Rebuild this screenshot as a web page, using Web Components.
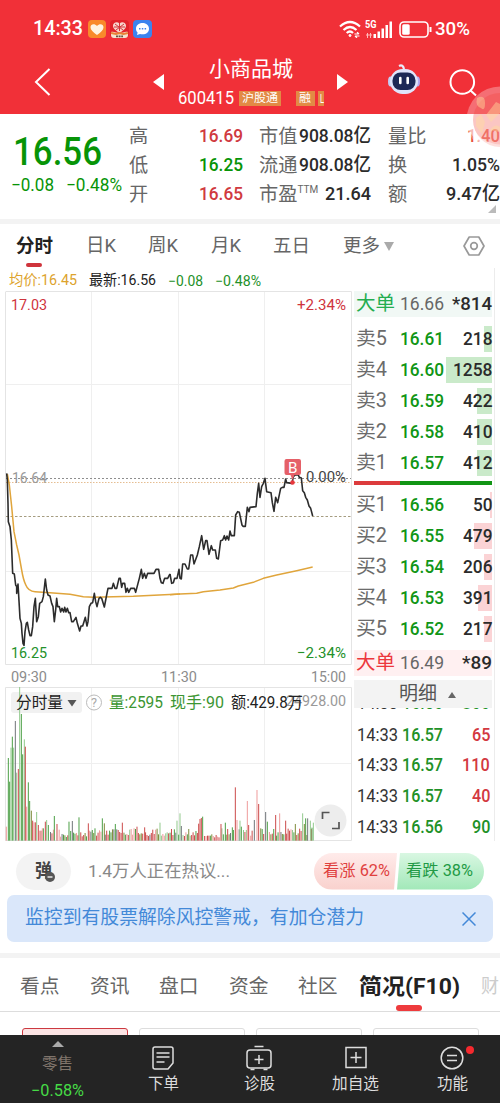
<!DOCTYPE html>
<html lang="zh-CN">
<head>
<meta charset="utf-8">
<title>小商品城 600415</title>
<style>
html,body{margin:0;background:#fff}
body{width:500px;height:1103px;overflow:hidden;font-family:Roboto,"Noto Sans CJK SC",sans-serif;color:#333}
</style>
</head>
<body>
<stock-page></stock-page>
<script>
/* Single-line text fitted to a given width: w = width, s = size, b = weight, c = colour */
class FitText extends HTMLElement{
  connectedCallback(){
    if(this.shadowRoot)return;
    const a=n=>this.getAttribute(n);
    const r=this.attachShadow({mode:'open'});
    r.innerHTML=`<style>:host{display:block;flex:none;white-space:nowrap;width:${a('w')}px;font-size:${a('s')}px;font-weight:${a('b')||400};line-height:1.2;${a('c')?`color:${a('c')}`:''}}
    span{display:inline-block;transform-origin:0 50%}</style><span><slot></slot></span>`;
    const s=r.querySelector('span'),w=s.getBoundingClientRect().width;
    if(w)s.style.transform=`scaleX(${a('w')/w})`;
  }
}
customElements.define('fit-text',FitText);

const define=(name,css,html)=>customElements.define(name,class extends HTMLElement{
  connectedCallback(){
    if(this.shadowRoot)return;
    this.attachShadow({mode:'open'}).innerHTML=`<style>*{box-sizing:border-box}:host{display:block;box-sizing:border-box}svg{display:block;flex:none}${css}</style>${typeof html==='function'?html(this):html}`;
  }
});

define('status-bar',`:host{display:flex;align-items:center;height:30px;padding:0 30px 0 33px;color:#fff}
.apps{display:flex;gap:4px;margin-left:5px}.r{display:flex;align-items:center;margin-left:auto}`,`
<fit-text w="50" s="19.5" b="500">14:33</fit-text>
<div class="apps">
<svg width="18" height="18" viewBox="0 0 18 18"><rect width="18" height="18" rx="4" fill="#f98a2b"/><path d="M9 15C5 12 2.500 10 2.500 7.200 2.500 4 6.500 3 9 6c2.500-3 6.500-2 6.500 1.200C15.500 10 13 12 9 15z" fill="#fff4e2"/></svg>
<svg width="19" height="18" viewBox="0 0 19 18"><rect width="19" height="18" rx="4" fill="#e2222a"/><path d="M9.500 13C5 10 3 8.500 3 5.800 3 2.500 7 1 9.500 3.500 12 1 16 2.500 16 5.800c0 2.700-2 4.200-6.500 7.200z" fill="#f7d5cd"/><path d="M5 4l8 6M14 4l-8 6M9.500 3v8M4 7h11" stroke="#d3343a"/><path d="M1 12c3-1 5 1 8.500 1s5.500-2 8.500-1v3q0 3-3 3H4q-3 0-3-3z" fill="#f6e3d0"/><path d="M1 13l5 1 3.500-1 4 1 4.500-1" stroke="#e98235" stroke-width="2" fill="none"/><path d="M6 16.300h7" stroke="#654" stroke-width="1.800" stroke-dasharray="2 .6"/></svg>
<svg width="19" height="18" viewBox="0 0 19 18"><rect width="19" height="18" rx="4" fill="#3c83ee"/><path d="M9.500 3c4 0 6.500 2.500 6.500 5.700s-2.500 5.600-6.500 5.600c-1 0-1.700-.1-2.500-.4L4 15l.6-2.500C3.500 11.500 3 10.300 3 8.700 3 5.500 5.500 3 9.500 3z" fill="#fff"/><path d="M6 8.700h1.500m1.300 0h1.500m1.300 0h1.500" stroke="#3c83ee" stroke-width="1.500"/></svg>
</div>
<div class="r">
<svg width="22" height="18" viewBox="0 0 22 18" fill="none" stroke="#fff" stroke-width="2.200"><path d="M1 6.500Q11-2.500 21 6.500M4.500 10Q11 4 17.500 10M7.700 13Q11 10 14 13"/><circle cx="11" cy="15.500" r="1" fill="#fff" stroke-width="1"/><path d="M15.500 14h4m-1.500-1.800 2 1.800M20.500 16h-4m1.500 1.800-2-1.800" stroke-width="1.200"/></svg>
<svg width="28" height="20" viewBox="0 0 28 20" style="margin-left:4px" fill="#fff"><text x="0" y="9" font-size="10.500" font-weight="700" textLength="11.500" lengthAdjust="spacingAndGlyphs">5G</text><path d="M8.500 15h2.500v4H8.500zM12.500 12.500H15V19h-2.500zM16.500 9.500H19V19h-2.500zM20.500 6H23v13h-2.500zM24.500 2.500H27V19h-2.500z"/><path d="M1 16h6M2.500 14v5M5.500 14v5" stroke="#fbb" stroke-width="1"/></svg>
<svg width="33" height="17" viewBox="0 0 33 17" style="margin-left:6px"><rect x="1" y="1" width="28" height="15" rx="4" fill="none" stroke="#fff" stroke-width="1.600"/><rect x="3.200" y="3.200" width="7.500" height="10.600" rx="1.500" fill="#fff"/><path d="M31.500 6v5" stroke="#fff" stroke-width="2"/></svg>
<fit-text w="35" s="18.500" b="500" style="margin-left:3px">30%</fit-text></div>`);

define('nav-bar',`:host{display:flex;height:60px;padding:0 24px 0 34px;color:#fff;align-items:center}
.mid{width:146px;margin:0 13px 0 14px;display:flex;flex-direction:column;align-items:center;align-self:flex-start;padding-top:3px}
.code{display:flex;align-items:center;height:20px;width:146px;margin-top:6px}
i{font-style:normal;display:block;height:15px;background:#e28a45;padding:1px 3px 0}`,`
<svg width="17" height="30" viewBox="0 0 17 30" fill="none" stroke="#fff" stroke-width="2" style="margin-top:-5px"><path d="M15.500 2L2 15l13.500 13"/></svg>
<svg width="11" height="16" viewBox="0 0 11 16" fill="#fff" style="margin:-4px 0 0 102px"><path d="M11 0v16L0 8z"/></svg>
<div class="mid"><fit-text w="84" s="21">小商品城</fit-text>
<div class="code"><fit-text w="56" s="18">600415</fit-text><i style="margin-left:5px;width:42px"><fit-text w="36" s="11.500">沪股通</fit-text></i><i style="margin-left:15px;width:19px"><fit-text w="12" s="11.500">融</fit-text></i><i style="margin-left:3px;width:6px;padding:1px 0 0 2px"><fit-text w="4" s="12">L</fit-text></i></div></div>
<svg width="11" height="16" viewBox="0 0 11 16" fill="#fff" style="margin-top:-4px"><path d="M0 0v16l11-8z"/></svg>
<svg width="34" height="32" viewBox="0 0 34 32" style="margin:-8px 0 0 39px"><path d="M12 2q4-2 5 3" stroke="#e9ecfb" stroke-width="2.200" fill="none"/><ellipse cx="3.500" cy="17.500" rx="2.500" ry="5" fill="#c3cdf5"/><ellipse cx="30.500" cy="17.500" rx="2.500" ry="5" fill="#b4a9f0"/><rect x="3" y="5" width="28" height="25" rx="12.500" fill="#dfe4fb"/><rect x="5.500" y="8.500" width="23" height="17.500" rx="8" fill="#1d2856"/><path d="M13.300 14v5M20.700 14v5" stroke="#fff" stroke-width="2.600" stroke-linecap="round"/></svg>
<svg width="28" height="28" viewBox="0 0 28 28" fill="none" stroke="#fff" stroke-width="2" style="margin:-2px 0 0 28px"><circle cx="13.300" cy="13" r="11.800"/><path d="M21 21l6 5.500"/></svg>`);

define('promo-badge',`:host{position:absolute;left:466px;top:86px;width:34px;height:68px;overflow:hidden}`,`
<svg width="68" height="68" viewBox="0 0 68 68"><circle cx="34" cy="34" r="33.500" fill="#fff" opacity=".3"/><circle cx="34" cy="34" r="27" fill="#f14339" opacity=".3"/><path d="M11 12q8-4 8 5t-4 5q-6-2-4-10zM20 29l10-13 4 2v9l-9 9zM10 32l5-4 4 8-3 12-6-8zM24 44q5-7 10-3v5z" fill="#ffdc9e" opacity=".45"/><path d="M5 43q8 16 29 18" stroke="#fff" stroke-width="5" opacity=".45" fill="none"/></svg>`);

define('quote-panel',`:host{display:grid;grid-template-columns:129px 114px 16px 112px 17px 112px;height:105px;padding-top:8px;position:relative;width:500px}
.p{grid-area:1/1;padding:6px 0 0 13px}.d{display:flex;gap:12px;margin:-1px 0 0 -2px}.g{grid-area:1/2;display:grid;grid-template-rows:repeat(3,29px)}
.r{display:flex;justify-content:space-between;align-items:center}
.g.b{grid-column:4}.g.c{grid-column:6}sup{font-size:10px;line-height:1;margin:-9px auto 0 0;color:#666}
svg{position:absolute;right:4px;bottom:6px}`,()=>{
const row=(l,v,w,c,t)=>`<div class="r"><fit-text w="${l.length*19.2}" s="19.200" c="#666">${l}</fit-text>${t?'<sup>TTM</sup>':''}<fit-text w="${w}" s="19" b="500" c="${c}">${v}</fit-text></div>`;
const R='#d03a40',G='#079407',K='#2b2b2b';
return `<div class="p"><fit-text w="89" s="39.500" b="500" c="#079407">16.56</fit-text><div class="d"><fit-text w="43" s="18" c="#079407">−0.08</fit-text><fit-text w="56" s="18" c="#079407">−0.48%</fit-text></div></div>
<div class="g">${row('高','16.69',44,R)+row('低','16.25',44,G)+row('开','16.65',44,R)}</div>
<div class="g b">${row('市值','908.08亿',72,K)+row('流通','908.08亿',72,K)+row('市盈','21.64',46,K,1)}</div>
<div class="g c">${row('量比','1.40',33,'#e8503f')+row('换','1.05%',48,K)+row('额','9.47亿',54,K)}</div><svg width="8" height="8"><path d="M8 0v8H0z" fill="#bbb"/></svg>`});

define('period-tabs',`:host{display:flex;height:49px;border-top:5px solid #f3f3f3;padding:0 15px 0 16px;align-items:center}
.on{position:relative}.on:after{content:"";position:absolute;left:10px;top:28px;width:16px;height:4px;border-radius:2px;background:#cf343c}`,`
<fit-text class="on" w="37" s="18.500" b="700" c="#222">分时</fit-text>
<fit-text w="30" s="19" c="#666" style="margin-left:33px">日K</fit-text><fit-text w="30" s="19" c="#666" style="margin-left:32px">周K</fit-text><fit-text w="30" s="19" c="#666" style="margin-left:33px">月K</fit-text><fit-text w="37" s="18.500" c="#666" style="margin-left:32px">五日</fit-text><fit-text w="37" s="18.500" c="#666" style="margin-left:33px">更多</fit-text>
<svg width="10" height="9" style="margin-left:4px"><path d="M0 0h10L5 9z" fill="#aaa"/></svg>
<svg width="22" height="20" viewBox="0 0 22 20" style="margin-left:auto" fill="none" stroke="#999" stroke-width="1.700"><path d="M6.200 1h9.600L21 10l-5.200 9H6.200L1 10z" stroke-linejoin="round"/><circle cx="11" cy="10" r="3.300"/></svg>`);

define('price-chart',`:host{width:352px;height:573px;padding-top:3px}
.info{display:flex;height:20px;align-items:center;padding-left:9px;gap:12px}
.chart{display:block}text{font-family:Roboto,"Noto Sans CJK SC",sans-serif}`,()=>{
const t=(x,y,w,c,s,v,b=400)=>`<text x="${x}" y="${y}" font-size="${s}" fill="${c}" font-weight="${b}" textLength="${w}" lengthAdjust="spacingAndGlyphs">${v}</text>`;
const price1='20,40 22,60 24,130 25,185 30,200 34,240 38,340 43,342 47,375 50,380 50,400 54,372 58,440 60,475 64,490 66,520 69,550 72,556 75,515 79,490 82,487 86,510 90,527 94,527 98,500 102,440 106,415 108,450 110,485 115,470 119,430 126,425 130,410 136,357 140,390 144,405 150,408 155,430 159,440 163,485 167,450 170,415 173,440 178,440 182,456 186,445 191,456 194,442 198,456 202,445 206,458 210,458 215,485 220,485 228,472 232,490 239,513 243,498 248,498 252,485 256,472 261,498 264,485 268,440 273,430 278,428 283,400 287,425 291,440 297,415 301,412 305,415 313,441 320,405 324,385 336,385 340,370 345,385 350,385 357,355 361,355 365,382 368,370 374,370 378,397 382,385 386,397 392,385 403,385 407,397 414,370 418,355 424,328 428,355 433,340 438,355 443,340 462,340 468,328 476,328 480,355 484,368 489,370 494,355 503,355 510,342';
const price2='0,402 5,430 10,428 14,415 21,415 27,388 30,415 34,417 38,372 45,372 52,387 56,387 62,345 68,345 72,372 82,345 88,320 95,287 101,328 107,302 111,302 117,343 124,317 128,330 136,330 140,355 145,357 152,302 158,300 163,287 167,300 171,288 176,300 180,273 184,287 193,287 197,225 203,215 208,217 216,255 219,259 226,259 232,202 237,215 240,202 258,200 262,160 266,130 270,172 275,140 280,130 285,115 290,155 303,158 307,188 312,214 317,172 323,188 332,145 337,142 342,142 347,117 350,128 366,130 370,110 376,105 385,105 388,112 394,114 398,152 403,158 407,172 412,180 417,198 422,205 428,228';
// volume bars: x, top, colour key
const col={g:'#4b9f45',l:'#91c98c',r:'#cb4a4a',p:'#ee9b9b',k:'#6f7478',o:'#7d8b3a'};
const key=`19,485,p 25,279,g 29,350,g 33,248,l 37,215,g 41,248,l 46,168,k 50,323,l 55,312,r 59,66,l 64,147,g 68,268,g 73,223,l 76,245,r 80,425,p 85,352,g 89,408,g 94,437,o 98,467,r 102,472,p 106,472,r 110,441,l 115,480,r 119,497,p 123,497,r 127,490,p 136,470,r 140,465,l 145,480,g 163,453,g 171,477,r 207,470,g 217,468,k 237,457,g 265,475,r 285,490,g 307,460,g 313,475,o 346,477,g 367,473,r 411,485,r 434,487,r 480,473,l 531,467,l 540,445,l 544,483,k 596,476,r 600,462,r 604,459,r 608,455,g 663,477,r 676,473,g 697,487,g 706,367,r 711,465,p 720,467,l 724,485,g 742,408,p 746,480,r 763,465,k 771,375,p 776,417,r 797,441,k 802,470,g 827,450,r 839,445,p 857,467,r 886,477,o 908,445,l 913,477,o 917,460,g 923,460,k 931,467,l 936,488,g 940,473,l`.split(' ').map(s=>s.split(','));
let bars='';
for(let i=0,x=130;x<938;i++,x+=4.32){
  if(key.some(k=>Math.abs(k[0]-x)<2.400))continue;
  const q=Math.abs(Math.sin(i*12.9898)*43758.5453)%1,z=Math.abs(Math.sin(i*78.233)*9631.17)%1;
  const low=(x>180&&x<205)||(x>620&&x<660);
  bars+=`<path d="M${x.toFixed(1)} 527V${(low?507+q*10:490+q*24).toFixed(0)}" stroke="${col['grlpgrkor'[Math.floor(z*9)]]}"/>`;
}
for(const k of key)bars+=`<path d="M${k[0]} 527V${k[1]}" stroke="${col[k[2]]}"/>`;
return `<div class="info"><fit-text w="68" s="14.500" c="#dda32c">均价:16.45</fit-text><fit-text w="67" s="14.500" c="#222">最新:16.56</fit-text><fit-text w="35" s="14" c="#24912a">−0.08</fit-text><fit-text w="46" s="14" c="#24912a">−0.48%</fit-text></div>
<svg class="chart" width="352" height="550" viewBox="0 291 352 550">
<g fill="none" stroke="#e4e4e4"><path d="M6 291.500H351.500V664.500H5.500V291.500M5.500 841V687.500H351.500V840.500H5.500"/><path d="M91.500 292V664M178.500 292V664M264.500 292V664M6 384.500H351M6 571.500H351M91.500 688V840M178.500 688V840M264.500 688V840M6 763.500H351" stroke="#efefef"/></g>
<path d="M6 478.500H351" stroke="#8e8e8e" stroke-dasharray="2 2"/><path d="M6 482.500H351" stroke="#e5bd91" stroke-dasharray="1.500 1.500"/><path d="M6 516.500H351" stroke="#a59c80" stroke-dasharray="2.500 2"/>
${t(11,309.500,36,'#cf343c',15.5,'17.03')}${t(297,309.500,49,'#cf343c',15.5,'+2.34%')}${t(12,482.500,35,'#999',15.5,'16.64')}${t(11,658,36,'#24912a',15.5,'16.25')}${t(297,657.500,49,'#24912a',15.5,'−2.34%')}${t(306,482,40,'#444',15.5,'0.00%')}
<g fill="none" stroke-linejoin="round"><g transform="translate(0 460) scale(.33333)"><path d="M22,42 L28,75 35,140 42,215 50,255 57,285 65,330 Q70,360 77,374 Q85,394 105,395 L150,398 210,403 250,410 280,412 400,409 540,402" stroke="#e0a53c" stroke-width="4.500"/><polyline points="${price1}" stroke="#2c2c2c" stroke-width="4.800"/></g>
<g transform="translate(170 440) scale(.33333)"><polyline points="0,464 30,462 80,460 100,455 150,450 190,444 205,438 250,427 280,415 320,405 380,392 428,381" stroke="#e0a53c" stroke-width="4.500"/><polyline points="${price2}" stroke="#2c2c2c" stroke-width="4.800"/></g></g>
<path d="M286.500 459h12.500q2 0 2 2v12q0 2-2 2h-4.500l-2 5-2-5h-4q-2 0-2-2v-12q0-2 2-2z" fill="#e56068"/><circle cx="292.500" cy="482.500" r="2.300" fill="#e8373d"/>${t(288,472.500,9.5,'#fff',14,'B')}
${t(11,682,36,'#8c8c8c',15,'09:30')}${t(161,682,36,'#8c8c8c',15,'11:30')}${t(311,682,35,'#8c8c8c',15,'15:00')}
<rect x="11" y="692" width="71" height="21" rx="3" fill="#f1f1f1"/>
<g transform="translate(0 665) scale(.33333)" stroke-width="3">${bars}</g>
${t(16,708,47,'#222',16,'分时量')}<path d="M67.500 700h9l-4.500 6.500z" fill="#555"/><circle cx="94" cy="702.500" r="7.500" fill="none" stroke="#bbb"/>${t(91,707,6,'#aaa',12,'?')}
${t(286,706,60,'#999',15,'24928.00')}${t(109,708,54,'#3c9632',16,'量:2595')}${t(170,708,54,'#3c9632',16,'现手:90')}${t(231,708,72,'#222',16,'额:429.8万')}
<circle cx="330.500" cy="820.500" r="16" fill="#ededed"/><path d="M322.500 819v-6.500h7M339 822v6.500h-7" fill="none" stroke="#555" stroke-width="1.700"/></svg>`});

define('book-row',`:host{display:grid;grid-template-columns:44px 1fr auto;align-items:center;height:26px;margin-bottom:5px;padding-left:2px}`,e=>{
const [l,p,q,w,side]=e.getAttribute('data').split('|'),big=side[0]=='B',c=side.endsWith('s')?'#caeaca':'#fbd3d5';
return `<style>:host{background:${big?(side=='Bs'?'#f1f8f5':'#fff0f1'):`linear-gradient(${c},${c}) right/${w}px 100% no-repeat`}}</style><fit-text w="${big?39:31}" s="19.500" c="${big?(side=='Bs'?'#24ad50':'#ec373d'):'#6b6b6b'}">${l}</fit-text><fit-text w="44" s="19" b="${big?400:500}" c="${big?'#666':'#109616'}">${p}</fit-text><fit-text w="${q.length*10-(q[0]=='*'?0:.5)}" s="19" b="500" c="#2b2b2b">${q}</fit-text>`});

define('trade-row',`:host{display:grid;grid-template-columns:45px 1fr auto;align-items:center;height:30.700px;padding:0 2px 0 3px}`,e=>{
const [p,q,c]=e.getAttribute('data').split('|');
return `<fit-text w="41" s="18" c="#333">14:33</fit-text><fit-text w="41" s="18" b="500" c="#219127">${p}</fit-text><fit-text w="${q.length*9.2}" s="18" b="500" c="${c=='r'?'#d33840':'#219127'}">${q}</fit-text>`});

define('order-book',`:host{width:143px;padding:23px 1px 0 2px;height:573px;border-right:1px solid #ececec;position:relative}
.s{width:138px}.gap{height:4px}.gap.n{height:3px}.bar{height:4px;margin-top:5px;margin-bottom:7px;background:linear-gradient(90deg,#dc3b3d 33%,#119515 33%)}
.h{height:28px;margin-top:-1px;background:#f3f3f3;display:flex;align-items:center;justify-content:center;gap:11px;padding:1px 0 0 8px}.tail{height:11px;overflow:hidden}.tail trade-row{margin-top:-21px}`,()=>{
const r=d=>`<book-row data="${d}"></book-row>`;
return `<div class="s">${r('大单|16.66|*814|0|Bs')}<div class="gap"></div>${['卖5|16.61|218|8|s','卖4|16.60|1258|46|s','卖3|16.59|422|15|s','卖2|16.58|410|15|s','卖1|16.57|412|15|s'].map(r).join('')}<div class="bar"></div>${['买1|16.56|50|2|b','买2|16.55|479|18|b','买3|16.54|206|8|b','买4|16.53|391|14|b','买5|16.52|217|8|b'].map(r).join('')}<div class="gap n"></div>${r('大单|16.49|*89|0|Bb')}
<div class="h"><fit-text w="38" s="19" c="#555">明细</fit-text><svg width="8" height="6"><path d="M4 0l4 6H0z" fill="#666"/></svg></div>
<div class="tail"><trade-row data="16.56|866|g"></trade-row></div>${['16.57|65|r','16.57|110|r','16.57|40|r','16.56|90|g'].map(d=>`<trade-row data="${d}"></trade-row>`).join('')}</div>`});

define('hot-talk',`:host{display:flex;align-items:center;height:54px;padding:6px 16px 0}
.b{width:55px;height:37px;border-radius:19px;background:#f3f3f3;display:flex;align-items:center;justify-content:center;position:relative;flex:none}
.b svg{position:absolute;left:29px;top:19px}.v{display:flex;margin-left:auto;width:170px;height:37px;border-radius:19px;overflow:hidden;flex:none}
.u,.d{display:flex;align-items:center}.u{width:84px;background:linear-gradient(#ffebea,#f9d1cd);padding-left:9px;clip-path:polygon(0 0,100% 0,calc(100% - 3px) 100%,0 100%)}
.d{width:88px;background:linear-gradient(#d9f7e2,#a1e8b8);padding-left:9px;clip-path:polygon(3px 0,100% 0,100% 100%,0 100%)}`,`
<div class="b"><fit-text w="17" s="18" b="700" c="#444">弹</fit-text><svg width="10" height="10"><circle cx="5" cy="5" r="5" fill="#555"/><path d="M2.500 5h5" stroke="#fff" stroke-width="1.300"/></svg></div>
<fit-text w="142" s="17" c="#888" style="margin-left:17px">1.4万人正在热议...</fit-text>
<div class="v"><div class="u"><fit-text w="67" s="16" c="#e0403e">看涨 62%</fit-text></div><div class="d"><fit-text w="67" s="16" c="#229a45">看跌 38%</fit-text></div></div>`);

define('alert-banner',`:host{display:flex;justify-content:space-between;align-items:center;height:47px;margin:0 7px 11px;padding:0 17px 0 18px;background:#dae7fa;border-radius:7px}`,`
<fit-text w="339" s="18.800" c="#4389d8">监控到有股票解除风控警戒，有加仓潜力</fit-text><svg width="14" height="14" stroke="#4389d8" stroke-width="1.500"><path d="M.5.5l13 13M13.500.5l-13 13"/></svg>`);

define('info-tabs',`:host{border-top:5px solid #f3f3f3;height:82px;overflow:hidden}
.t{display:flex;align-items:center;height:54px;border-bottom:1px solid #ddd;padding:5px 0 0 20px;width:500px}
.on{position:relative}.on:after{content:"";position:absolute;left:37px;top:31px;width:26px;height:6px;border-radius:3px;background:#ee3b3d}
.c{display:flex;gap:11px;padding:16px 0 0 22px}.c div{width:106px;height:40px;border:1px solid #ddd;border-radius:3px;flex:none}.c .a{border-color:#cc3940;background:#fce4e4}`,`
<div class="t">${['看点','资讯','盘口','资金','社区'].map(x=>`<fit-text w="39.500" s="19.750" c="#666" style="margin-right:30px">${x}</fit-text>`).join('')}<fit-text class="on" w="101" s="22" b="700" c="#222" style="margin-left:-9px">简况(F10)</fit-text><fit-text w="18" s="19" c="#ccc" style="margin-left:21px">财</fit-text></div>
<div class="c"><div class="a"></div><div></div><div></div><div></div></div>`);

define('bottom-bar',`:host{display:grid;grid-template-columns:115px 96px 96px 97px 96px;height:68px;background:#242424;color:#ddd}
div{display:flex;flex-direction:column;align-items:center;padding-top:10px;position:relative}
div fit-text{margin-top:4px}div.f{padding-top:6px}.f fit-text:nth-of-type(1){margin-top:8px}.f fit-text:nth-of-type(2){margin-top:7px}
i{position:absolute;width:8px;height:8px;border-radius:50%;background:#f5292e;left:62px;top:11px}`,()=>{
const S='<svg width="28" height="26" viewBox="0 0 28 26" fill="none" stroke="#ddd" stroke-width="1.500">';
return `<div class="f"><svg width="12" height="6"><path d="M6 0l6 6H0z" fill="#aaa"/></svg><fit-text w="31" s="15.500" c="#80756c">零售</fit-text><fit-text w="53" s="16.500" c="#46da46">−0.58%</fit-text></div>
<div>${S}<path d="M6 2h16q2 0 2 2v14l-5 6H6q-2 0-2-2V4q0-2 2-2zM24 18l-5 6M7.500 8h13M7.500 12h13M7.500 17h8"/></svg><fit-text w="31" s="15.500">下单</fit-text></div>
<div>${S}<rect x="2" y="5" width="24" height="18" rx="3"/><path d="M9.500 1.500h9M14 10v9M9.500 14.500h9M5.500 24.500h4M18.500 24.500h4"/></svg><fit-text w="31" s="15.500">诊股</fit-text></div>
<div>${S}<path d="M4 2.500h20v20H4zM14 7v11M8.500 12.500h11"/></svg><fit-text w="47" s="15.700">加自选</fit-text></div>
<div>${S}<circle cx="14" cy="13" r="10.800"/><path d="M9 10.500h10M9 15.500h10"/></svg><fit-text w="31" s="15.500">功能</fit-text><i></i></div>`});

define('stock-page',`:host{width:500px;height:1103px;position:relative;overflow:hidden;background:#fff}
header{background:#f13038;height:114px;padding-top:14px}nav-bar{margin-top:10px}.m{display:flex;height:573px}`,`<header><status-bar></status-bar><nav-bar></nav-bar></header><quote-panel></quote-panel><period-tabs></period-tabs>
<div class="m"><price-chart></price-chart><order-book></order-book></div><hot-talk></hot-talk><alert-banner></alert-banner><info-tabs></info-tabs><bottom-bar></bottom-bar><promo-badge></promo-badge>`);
</script>
</body>
</html>
